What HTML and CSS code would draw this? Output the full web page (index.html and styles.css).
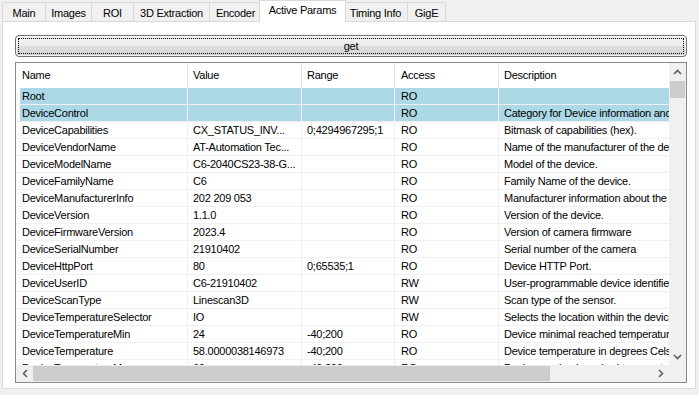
FILE: index.html
```html
<!DOCTYPE html>
<html lang="en">
<head>
    <meta charset="UTF-8">
    <title>Active Params</title>
    <link rel="stylesheet" href="styles.css">
</head>
<body>
    <div class="tabs">
        <div class="tab tab-main">Main</div>
        <div class="tab tab-images">Images</div>
        <div class="tab tab-roi">ROI</div>
        <div class="tab tab-3d">3D Extraction</div>
        <div class="tab tab-encoder">Encoder</div>
        <div class="tab tab-active">Active Params</div>
        <div class="tab tab-timing">Timing Info</div>
        <div class="tab tab-gige">GigE</div>
    </div>

    <div class="panel">
        <button class="get-btn" type="button">get</button>

        <div class="list">
            <div class="list-main">
                <div class="list-view">
                    <div class="list-head">
                        <div class="cell c1">Name</div>
                        <div class="cell c2">Value</div>
                        <div class="cell c3">Range</div>
                        <div class="cell c4">Access</div>
                        <div class="cell c5">Description</div>
                    </div>
                    <div class="list-rows" id="rows">
                        <!-- rows are filled in below -->
                    </div>
                </div>
                <div class="vscroll">
                    <div class="sb-btn">
                        <svg width="9" height="6" viewBox="0 0 9 6"><polyline points="1,5 4.5,1.5 8,5" fill="none" stroke="#606060" stroke-width="1.6"/></svg>
                    </div>
                    <div class="vthumb"></div>
                    <div class="sb-fill"></div>
                    <div class="sb-btn">
                        <svg width="9" height="6" viewBox="0 0 9 6"><polyline points="1,1 4.5,4.5 8,1" fill="none" stroke="#606060" stroke-width="1.6"/></svg>
                    </div>
                </div>
            </div>
            <div class="hscroll-row">
                <div class="hscroll">
                    <div class="sb-btn">
                        <svg width="6" height="9" viewBox="0 0 6 9"><polyline points="5,1 1.5,4.5 5,8" fill="none" stroke="#606060" stroke-width="1.6"/></svg>
                    </div>
                    <div class="hthumb"></div>
                    <div class="sb-fill"></div>
                    <div class="sb-btn">
                        <svg width="6" height="9" viewBox="0 0 6 9"><polyline points="1,1 4.5,4.5 1,8" fill="none" stroke="#606060" stroke-width="1.6"/></svg>
                    </div>
                </div>
                <div class="corner"></div>
            </div>
        </div>
    </div>

    <script>
        // parameter rows: name, value, range, access, description, category
        const params = [
            ['Root', '', '', 'RO', '', true],
            ['DeviceControl', '', '', 'RO', 'Category for Device information and control.', true],
            ['DeviceCapabilities', 'CX_STATUS_INV...', '0;4294967295;1', 'RO', 'Bitmask of capabilities (hex).'],
            ['DeviceVendorName', 'AT-Automation Tec...', '', 'RO', 'Name of the manufacturer of the device.'],
            ['DeviceModelName', 'C6-2040CS23-38-G...', '', 'RO', 'Model of the device.'],
            ['DeviceFamilyName', 'C6', '', 'RO', 'Family Name of the device.'],
            ['DeviceManufacturerInfo', '202 209 053', '', 'RO', 'Manufacturer information about the device.'],
            ['DeviceVersion', '1.1.0', '', 'RO', 'Version of the device.'],
            ['DeviceFirmwareVersion', '2023.4', '', 'RO', 'Version of camera firmware'],
            ['DeviceSerialNumber', '21910402', '', 'RO', 'Serial number of the camera'],
            ['DeviceHttpPort', '80', '0;65535;1', 'RO', 'Device HTTP Port.'],
            ['DeviceUserID', 'C6-21910402', '', 'RW', 'User-programmable device identifier.'],
            ['DeviceScanType', 'Linescan3D', '', 'RW', 'Scan type of the sensor.'],
            ['DeviceTemperatureSelector', 'IO', '', 'RW', 'Selects the location within the device, where the temperature will be measured.'],
            ['DeviceTemperatureMin', '24', '-40;200', 'RO', 'Device minimal reached temperature in degrees Celsius.'],
            ['DeviceTemperature', '58.0000038146973', '-40;200', 'RO', 'Device temperature in degrees Celsius.'],
            ['DeviceTemperatureMax', '60', '-40;200', 'RO', 'Device maximal reached temperature in degrees Celsius.']
        ];

        document.getElementById('rows').innerHTML = params.map(p => `
            <div class="row${p[5] ? ' row-cat' : ''}">
                <div class="cell c1">${p[0]}</div>
                <div class="cell c2">${p[1]}</div>
                <div class="cell c3">${p[2]}</div>
                <div class="cell c4">${p[3]}</div>
                <div class="cell c5">${p[4]}</div>
            </div>
        `).join('');
    </script>
</body>
</html>
```

FILE: styles.css
```css
* {
    margin: 0;
    padding: 0;
    box-sizing: border-box;
}

body {
    font-family: "Liberation Sans", Arial, sans-serif;
    font-size: 11px;
    letter-spacing: -0.25px;
    color: #000;
    background: #f0f0f0;
    width: 699px;
    height: 395px;
    overflow: hidden;
}

/* tab strip */
.tabs {
    display: flex;
    align-items: flex-end;
    height: 21px;
    padding-left: 2px;
}

.tab {
    height: 19px;
    line-height: 18px;
    padding-top: 1px;
    text-align: center;
    white-space: nowrap;
    background: #f0f0f0;
    border: 1px solid #d9d9d9;
    border-bottom: none;
    margin-right: -1px;
}

.tab-main { width: 44px; }
.tab-images { width: 47px; }
.tab-roi { width: 43px; }
.tab-3d { width: 77px; }
.tab-encoder { width: 53px; }
.tab-timing { width: 65px; }
.tab-gige { width: 39px; }

.tab-active {
    position: relative;
    z-index: 1;
    width: 87px;
    height: 22px;
    line-height: 18px;
    padding-top: 0;
    margin-left: -2px;
    margin-right: -3px;
    margin-bottom: -1px;
    background: #fff;
}

/* page panel */
.panel {
    margin-left: 2px;
    width: 694px;
    height: 368px;
    background: #fff;
    border: 1px solid #d9d9d9;
    padding: 13px 8px 0 12px;
}

.get-btn {
    display: block;
    width: 672px;
    height: 22px;
    font-family: inherit;
    font-size: 11px;
    letter-spacing: -0.25px;
    color: #000;
    border: 1px solid #707070;
    border-radius: 4px;
    background: linear-gradient(#f3f3f3, #ececec 50%, #dedede 51%, #d4d4d4);
    box-shadow: inset 0 0 0 1px rgba(255,255,255,0.7);
    outline: 1px dotted #000;
    outline-offset: -4px;
}

/* list view */
.list {
    margin-top: 5px;
    width: 672px;
    height: 321px;
    border: 1px solid #828790;
    display: flex;
    flex-direction: column;
}

.list-main {
    display: flex;
    height: 302px;
}

.list-view {
    width: 653px;
    overflow: hidden;
}

.list-head,
.row {
    display: grid;
    grid-template-columns: 172px 114px 93px 104px 420px;
}

.list-head {
    height: 25px;
    line-height: 25px;
}

.list-head .cell {
    border-right: 1px solid #e5e5e5;
}

.cell {
    white-space: nowrap;
    overflow: hidden;
    padding-left: 5px;
}

.c1 { padding-left: 6px; }
.c4 { padding-left: 6px; }

.row {
    height: 17px;
    line-height: 16px;
    border-bottom: 1px solid #f0f0f0;
}

.row .cell {
    border-right: 1px solid #f0f0f0;
}

.row .c1 {
    border-left: 4px solid #fff;
    padding-left: 2px;
}

.row-cat .cell {
    background: #add8e6;
}

/* scroll bars */
.vscroll {
    width: 17px;
    background: #f0f0f0;
    display: flex;
    flex-direction: column;
}

.sb-btn {
    width: 17px;
    height: 17px;
    display: flex;
    align-items: center;
    justify-content: center;
    flex-shrink: 0;
}

.vthumb {
    height: 17px;
    margin: 1px 1px 0 1px;
    background: #cdcdcd;
}

.sb-fill {
    flex: 1;
}

.hscroll-row {
    display: flex;
    height: 17px;
}

.hscroll {
    width: 653px;
    background: #f0f0f0;
    display: flex;
}

.hthumb {
    width: 517px;
    margin: 1px 0;
    background: #cdcdcd;
}

.corner {
    width: 17px;
    background: #f0f0f0;
}
```
